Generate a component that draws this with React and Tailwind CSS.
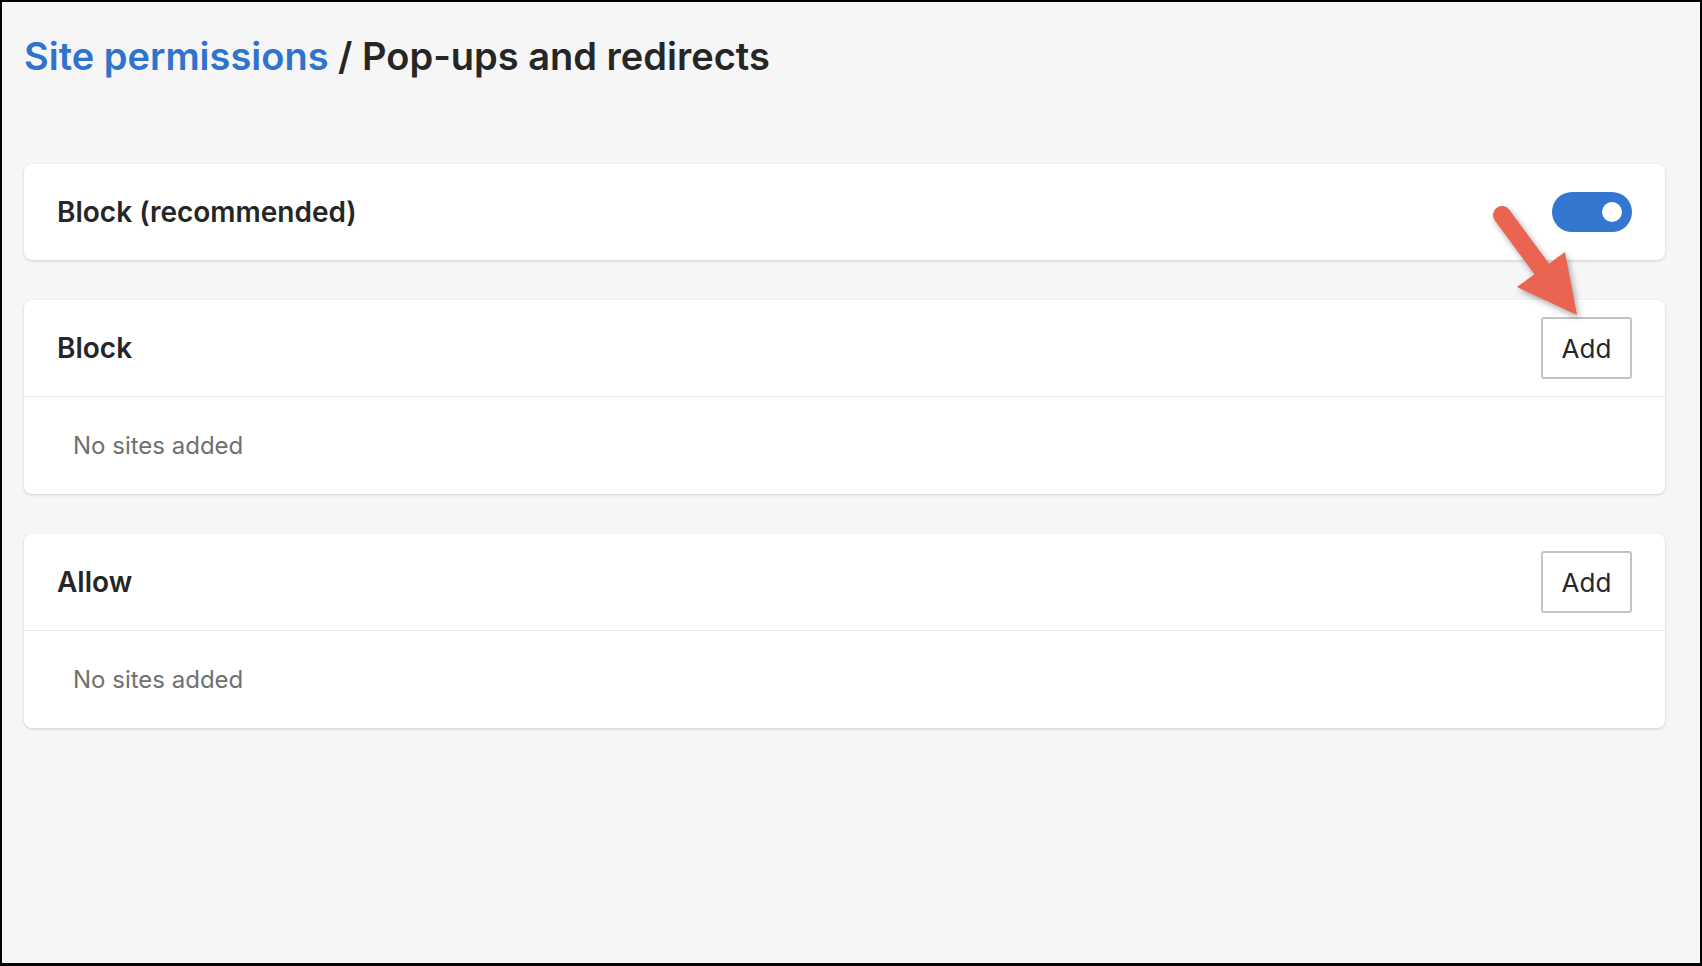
import React from "react";

function AddButton() {
  return (
    <button className="w-[91px] h-[62px] border-2 border-[#c4c4c4] rounded-[3px] bg-white text-[26px] text-[#262626] flex items-center justify-center">
      Add
    </button>
  );
}

function SiteList({ title }) {
  return (
    <div className="bg-white rounded-lg shadow-[0_1px_3px_rgba(0,0,0,0.16)]">
      <div className="h-[97px] flex items-center justify-between pl-[33px] pr-[33px] border-b border-[#e6e6e6]">
        <span className="text-[28px] font-semibold text-[#262626]">{title}</span>
        <AddButton />
      </div>
      <div className="h-[97px] flex items-center pl-[49px]">
        <span className="text-[24px] text-[#707070]">No sites added</span>
      </div>
    </div>
  );
}

export default function App() {
  return (
    <div
      className="relative w-full h-[966px] bg-[#f6f6f6] border-2 border-b-[3px] border-black"
      style={{ fontFamily: "Inter, 'Noto Sans', sans-serif" }}
    >
      <div className="pl-[22px] pr-[35px] pt-[31px]">
        {/* Breadcrumb */}
        <h1 className="text-[38px] leading-[46px] font-semibold">
          <span className="text-[#3073cf]">Site permissions</span>
          <span className="text-[#262626]"> / Pop-ups and redirects</span>
        </h1>

        <div className="mt-[85px] flex flex-col gap-[40px]">
          {/* Block (recommended) */}
          <div className="bg-white rounded-lg shadow-[0_1px_3px_rgba(0,0,0,0.16)] h-[96px] flex items-center justify-between pl-[33px] pr-[33px]">
            <span className="text-[28px] font-semibold text-[#262626]">Block (recommended)</span>
            <div className="w-[80px] h-[40px] rounded-full bg-[#3477d0] flex items-center justify-end pr-[10px]">
              <div className="w-[20px] h-[20px] rounded-full bg-white" />
            </div>
          </div>

          <SiteList title="Block" />
          <SiteList title="Allow" />
        </div>
      </div>

      {/* annotation arrow */}
      <svg
        className="absolute left-[1478px] top-[188px] drop-shadow-[2px_3px_3px_rgba(0,0,0,0.35)]"
        width="120"
        height="140"
        viewBox="0 0 120 140"
      >
        <line x1="22" y1="25" x2="64" y2="82" stroke="#eb6452" strokeWidth="18" strokeLinecap="round" />
        <polygon points="37,97 85,62 97,125" fill="#eb6452" />
      </svg>
    </div>
  );
}
